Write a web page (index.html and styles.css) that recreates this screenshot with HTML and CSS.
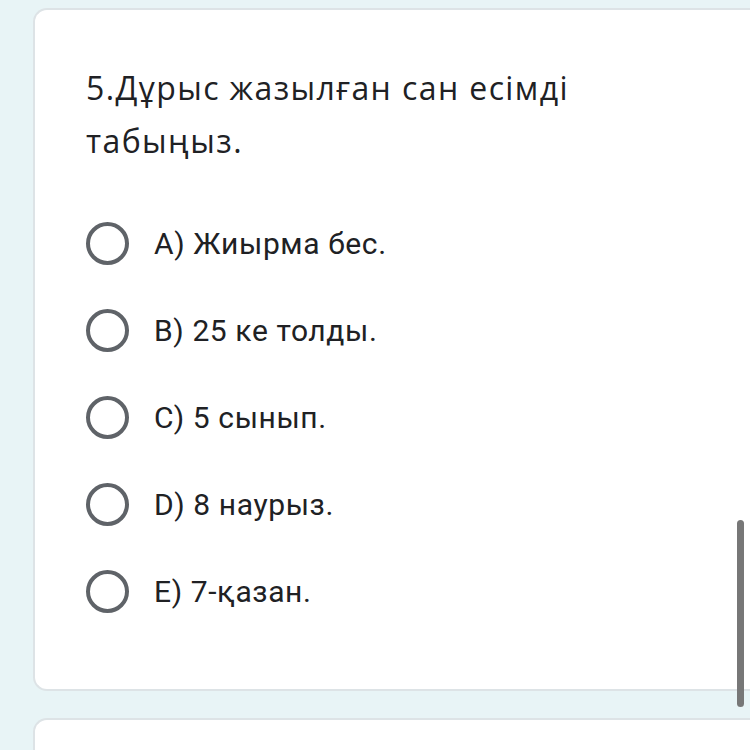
FILE: index.html
```html
<!DOCTYPE html>
<html lang="kk">
<head>
<meta charset="utf-8">
<link rel="stylesheet" href="styles.css">
</head>
<body>
<div class="page">
  <div class="card">
    <div class="title">5.Дұрыс жазылған сан есімді табыңыз.</div>
    <div class="options">
      <div class="option"><span class="radio"></span><span class="label">A) Жиырма бес.</span></div>
      <div class="option"><span class="radio"></span><span class="label">B) 25 ке толды.</span></div>
      <div class="option"><span class="radio"></span><span class="label">C) 5 сынып.</span></div>
      <div class="option"><span class="radio"></span><span class="label">D) 8 наурыз.</span></div>
      <div class="option"><span class="radio"></span><span class="label">E) 7-қазан.</span></div>
    </div>
  </div>
  <div class="card next"></div>
</div>
<div class="scrollbar"></div>
</body>
</html>
```
FILE: styles.css
```css
html, body {
  margin: 0;
  padding: 0;
  width: 750px;
  height: 750px;
  overflow: hidden;
  background: #e8f4f6;
}
.page {
  padding: 8px 0 0 33px;
  display: flex;
  flex-direction: column;
  gap: 27px;
}
.card {
  background: #fff;
  border: 2px solid #dde3e6;
  border-right: none;
  border-radius: 14px 0 0 14px;
  width: 717px;
  box-sizing: border-box;
  padding: 51px 0 0 51px;
  height: 683px;
}
.card.next {
  height: 40px;
}
.title {
  font-family: "Open Sans", sans-serif;
  font-size: 32px;
  line-height: 53px;
  letter-spacing: 1.4px;
  color: #202124;
  width: 540px;
}
.options {
  margin-top: 54px;
  display: flex;
  flex-direction: column;
  gap: 43px;
}
.option {
  display: flex;
  align-items: center;
  height: 44px;
}
.radio {
  width: 43px;
  height: 43px;
  box-sizing: border-box;
  border: 4px solid #5f6368;
  border-radius: 50%;
  flex: none;
}
.label {
  margin-left: 25px;
  font-family: Roboto, sans-serif;
  font-size: 30px;
  letter-spacing: 0.6px;
  color: #202124;
}
.scrollbar {
  position: absolute;
  left: 737px;
  top: 520px;
  width: 7px;
  height: 187px;
  border-radius: 4px;
  background: #777;
}
```
